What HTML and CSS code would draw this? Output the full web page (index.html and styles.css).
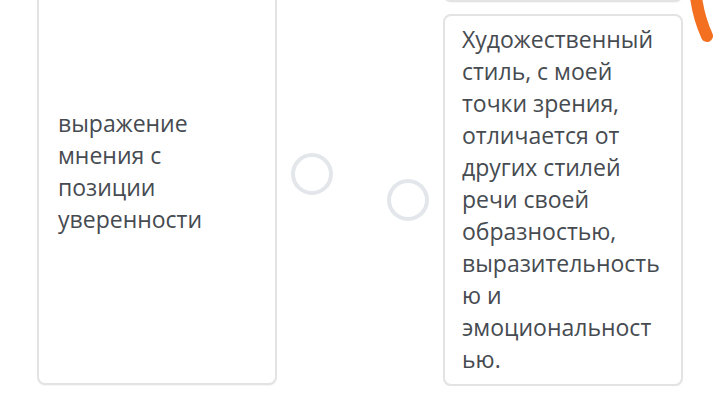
FILE: index.html
```html
<!DOCTYPE html>
<html lang="ru">

<head>
  <meta charset="UTF-8" />
  <title>Сопоставление</title>
  <link rel="stylesheet" href="styles.css">
</head>

<body>
  <div class="board">

    <!-- Left column: statement + its answer slot -->
    <div class="pair pair-left">
      <div class="card card-tall">
        выражение мнения с позиции уверенности
      </div>
      <span class="slot"></span>
    </div>

    <!-- Right column: options list -->
    <div class="options">
      <div class="pair">
        <span class="slot"></span>
        <div class="card card-prev"></div>
      </div>
      <div class="pair">
        <span class="slot"></span>
        <div class="card">
          Художественный стиль, с моей точки зрения, отличается от других стилей речи своей образностью, выразительностью и эмоциональностью.
        </div>
      </div>
    </div>

    <!-- pen mark -->
    <svg class="mark" width="40" height="60" viewBox="0 0 40 60">
      <path d="M15 -12 Q17 14 27 36" fill="none" stroke="#f37021" stroke-width="12" stroke-linecap="round" />
    </svg>
  </div>
</body>

</html>
```

FILE: styles.css
```css
body {
  margin: 0;
  background: #fff;
  font-family: 'Open Sans', 'Noto Sans', sans-serif;
  color: #464b51;
  overflow: hidden;
}

.board {
  position: relative;
  display: flex;
  align-items: flex-end;
  gap: 13px;
  height: 386px;
  padding-left: 37px;
}

.pair {
  display: flex;
  align-items: center;
  gap: 14px;
}

.pair-left {
  margin-bottom: 1px;
}

.options {
  display: flex;
  flex-direction: column;
  gap: 12px;
  margin-left: 41px;
}

.card {
  box-sizing: border-box;
  width: 240px;
  padding: 7px 19px 9px 17px;
  background: #fff;
  border: 2px solid #e3e3e3;
  border-radius: 8px;
  box-shadow: 0 1px 1px rgba(0, 0, 0, 0.04);
  font-size: 23px;
  line-height: 32px;
  overflow-wrap: anywhere;
}

.card-tall {
  height: 422px;
  display: flex;
  align-items: center;
  padding: 0 16px 6px 19px;
}

.card-prev {
  height: 140px;
}

.slot {
  flex: none;
  width: 42px;
  height: 42px;
  box-sizing: border-box;
  border: 4px solid #e3e6ea;
  border-radius: 50%;
}

.mark {
  position: absolute;
  top: 0;
  right: 0;
}
```
